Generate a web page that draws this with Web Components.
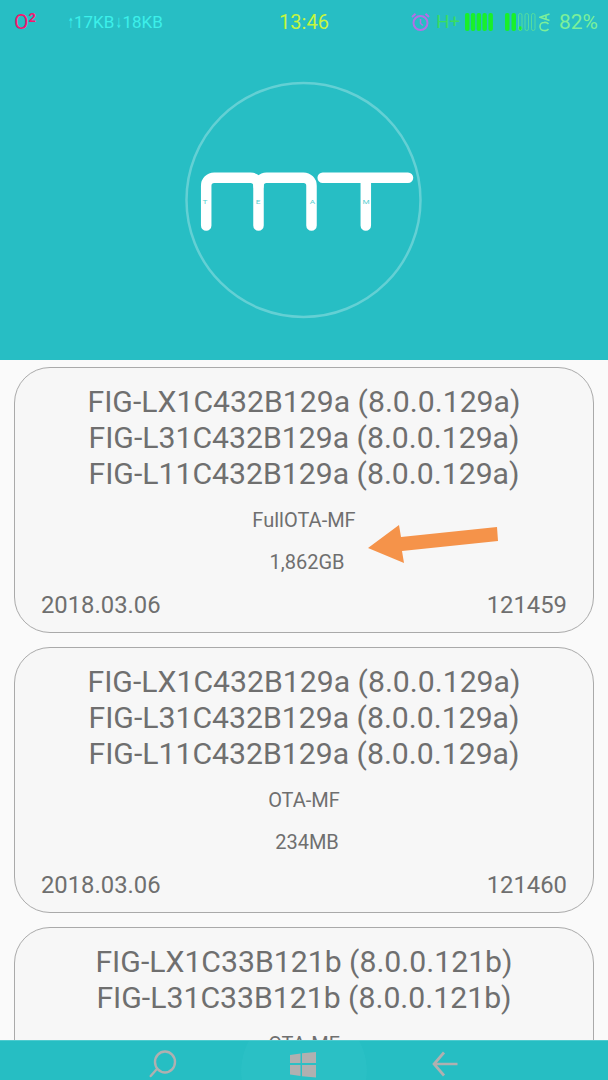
<!doctype html>
<html><head><meta charset="utf-8"><title>MT Team</title>
<style>
html,body{margin:0;padding:0;background:#fafafa}
body{width:608px;height:1080px;overflow:hidden;font-family:Roboto,"Liberation Sans",sans-serif}
app-shell{width:608px;height:1080px}
</style></head><body>
<template id="t-shell"><style>
:host{display:flex;flex-direction:column;position:relative;overflow:hidden}
.list{flex:1;min-height:0;overflow:hidden;display:flex;flex-direction:column;gap:14px;padding:7px 14px 0;background:#fafafa}
::slotted(fw-card){flex:none}
</style><slot name="header"></slot><div class="list"><slot></slot></div><slot name="nav"></slot></template>

<template id="t-status"><style>
:host{display:grid;grid-template-columns:1fr auto 1fr;align-items:center;height:44px;padding:0 10px 0 14px;font-size:20px;line-height:44px;white-space:nowrap}
.l,.r{display:flex;align-items:center}
.r{justify-content:flex-end}
.op{color:#f5166f;font-size:21px;width:52px}
.op sup{font-size:13px;font-weight:700;line-height:0;vertical-align:7px}
.net{color:#3cf0ea;font-size:17px}
.net i{font-style:normal;font-family:"DejaVu Sans",sans-serif;font-size:14px;display:inline-block;width:8px;text-align:center;line-height:1;transform:scale(.5,1)}
.time{color:#c6f53f;font-size:20px;position:relative;left:-2px}
.h{color:#39dc62;font-size:18.500px;margin:0 5px 0 6px}
.pct{color:#7cf09a;font-size:21px;margin-left:9px}
svg{display:block;flex:none}
.ac{margin-left:3px}
</style>
<div class="l"><span class="op">O<sup>2</sup></span><span class="net"><i>↑</i>17KB<i>↓</i>18KB</span></div>
<div class="time">13:46</div>
<div class="r">
<svg width="19" height="20" viewBox="0 0 19 20" fill="none" stroke="#b46fe6" stroke-width="2"><circle cx="9.500" cy="11" r="7"/><path d="M9.500 7v4.500l2.500 2" stroke-width="1.500"/><path d="M1 5L4.500 1.800M18 5L14.500 1.800"/></svg>
<span class="h">H+</span>
<svg width="28" height="18" viewBox="0 0 28 18" fill="#18f02a"><rect x="0" y="0" width="4.500" height="18" rx="2"/><rect x="5.800" y="0" width="4.500" height="18" rx="2"/><rect x="11.600" y="0" width="4.500" height="18" rx="2"/><rect x="17.400" y="0" width="4.500" height="18" rx="2"/><rect x="23.400" y="0" width="4.500" height="18" rx="2"/></svg>
<svg style="margin-left:12px" width="31" height="18" viewBox="0 0 31 18"><g fill="#18f02a"><rect x="0" y="0" width="4.500" height="18" rx="2"/><rect x="6.500" y="0" width="4.500" height="18" rx="2"/><circle cx="15.200" cy="15.500" r="2.200"/></g><g fill="none" stroke="#54dca0" stroke-width="1"><rect x="13.500" y=".5" width="3.500" height="17" rx="1.700"/><rect x="20" y=".5" width="3.500" height="17" rx="1.700"/><rect x="26.500" y=".5" width="3.500" height="17" rx="1.700"/></g></svg>
<svg class="ac" width="11" height="19" viewBox="0 0 11 19" fill="none" stroke="#7cf09a" stroke-width="1.600"><path d="M10.500 1L1 4.200l9.500 3.200M7 2.300v3.800"/><path d="M9.500 11a4.500 4 0 0 0-4.500-1.500 4 4 0 0 0-4 4 4 4 0 0 0 4 4 4.500 4 0 0 0 4.500-1.500"/></svg>
<span class="pct">82%</span>
</div></template>

<template id="t-header"><style>
:host{display:flex;flex-direction:column;height:360px;background:#27bec4;flex:none}
.logo{flex:1;display:flex;justify-content:center;align-items:flex-start;padding-top:38px}
svg{display:block;overflow:visible}
text{font:5.500px Roboto,sans-serif;fill:#5acfd2;text-anchor:middle}
</style><slot></slot>
<div class="logo"><svg width="240" height="240" viewBox="0 0 240 240">
<circle cx="119.500" cy="118" r="117" fill="none" stroke="#fff" stroke-opacity=".28" stroke-width="2.500"/>
<g fill="none" stroke="#fff" stroke-width="10.500" stroke-linecap="round" stroke-linejoin="round">
<path d="M22.200 143.500V103.700a8 8 0 0 1 8-8H66.500a8 8 0 0 1 8 8V143.500"/>
<path d="M74.500 103.700a8 8 0 0 1 8-8H119.500a8 8 0 0 1 8 8V143.500"/>
<path d="M138.700 95.700H224M181.800 95.700V143.500"/>
</g>
<text transform="translate(21 122) scale(1.500 1)">T</text><text transform="translate(74 122) scale(1.500 1)">E</text><text transform="translate(128.500 122) scale(1.500 1)">A</text><text transform="translate(182 122) scale(1.500 1)">M</text>
</svg></div></template>

<template id="t-card"><style>
:host{display:flex;flex-direction:column;box-sizing:border-box;height:266px;background:#f7f7f7;border:1px solid #aaa;border-radius:36px;color:#6f6f6f;text-align:center;padding:16px 26px 0}
.t{font-size:30.200px;line-height:36px;white-space:nowrap}
.k,.s{font-size:20px;line-height:24px}
.k{margin-top:16px}
.s{margin-top:18px;padding-left:6px}
.f{display:flex;justify-content:space-between;font-size:23.800px;line-height:28px;margin-top:17px}
</style>
<div class="t"><slot name="title"></slot></div>
<div class="k"><slot name="kind"></slot></div>
<div class="s"><slot name="size"></slot></div>
<div class="f"><slot name="date"></slot><slot name="id"></slot></div>
</template>

<template id="t-nav"><style>
:host{display:flex;justify-content:center;align-items:flex-start;height:40px;padding-top:9px;flex:none;background:radial-gradient(circle 63px at 304px 30px,#2ac0c5 99%,#26bec3 100%);border-top:1px solid #4fcbcf;box-sizing:border-box;overflow:hidden}
svg{display:block;flex:none}
.a{width:141px;display:flex;justify-content:center}
</style>
<div class="a"><svg width="30" height="30" viewBox="0 0 30 30" fill="none" stroke="#b0b0b0" stroke-width="2.400"><ellipse cx="17" cy="12" rx="10" ry="10.500"/><path d="M8 20L2.700 26" stroke-linecap="round"/></svg></div>
<div class="a"><svg width="30" height="30" viewBox="0 0 30 30" fill="#b0b0b0"><path d="M1 5L11.500 3.500V13H1zM13 3.300L27 2V13H13zM1 15H11.500V26L1 24.500zM13 15H27V27.500L13 26.200z"/></svg></div>
<div class="a"><svg width="30" height="30" viewBox="0 0 30 30" fill="none" stroke="#b0b0b0" stroke-width="2.700"><path d="M27.500 14H4M14 2.500L4 14l10 11.500"/></svg></div>
</template>

<template id="t-arrow"><style>
:host{position:absolute;left:368px;top:525px;width:130px;height:38px;display:block}
svg{display:block}
</style><svg width="130" height="38" viewBox="0 0 130 38"><path fill="#f5934a" d="M0 23L31 0 33 12 129 2 130 16 34 26 36 38Z"/></svg></template>

<app-shell>
<mt-header slot="header"><status-bar></status-bar></mt-header>
<fw-card><span slot="title">FIG-LX1C432B129a (8.0.0.129a)<br>FIG-L31C432B129a (8.0.0.129a)<br>FIG-L11C432B129a (8.0.0.129a)</span><span slot="kind">FullOTA-MF</span><span slot="size">1,862GB</span><span slot="date">2018.03.06</span><span slot="id">121459</span></fw-card>
<fw-card><span slot="title">FIG-LX1C432B129a (8.0.0.129a)<br>FIG-L31C432B129a (8.0.0.129a)<br>FIG-L11C432B129a (8.0.0.129a)</span><span slot="kind">OTA-MF</span><span slot="size">234MB</span><span slot="date">2018.03.06</span><span slot="id">121460</span></fw-card>
<fw-card style="height:300px"><span slot="title">FIG-LX1C33B121b (8.0.0.121b)<br>FIG-L31C33B121b (8.0.0.121b)</span><span slot="kind">OTA-MF</span></fw-card>
<bottom-nav slot="nav"></bottom-nav>
<mark-arrow slot="nav"></mark-arrow>
</app-shell>
<script>
for(const [tag,id] of [['app-shell','t-shell'],['status-bar','t-status'],['mt-header','t-header'],['fw-card','t-card'],['bottom-nav','t-nav'],['mark-arrow','t-arrow']]){
customElements.define(tag,class extends HTMLElement{constructor(){super();this.attachShadow({mode:'open'}).appendChild(document.getElementById(id).content.cloneNode(true));}});
}
</script>
</body></html>
